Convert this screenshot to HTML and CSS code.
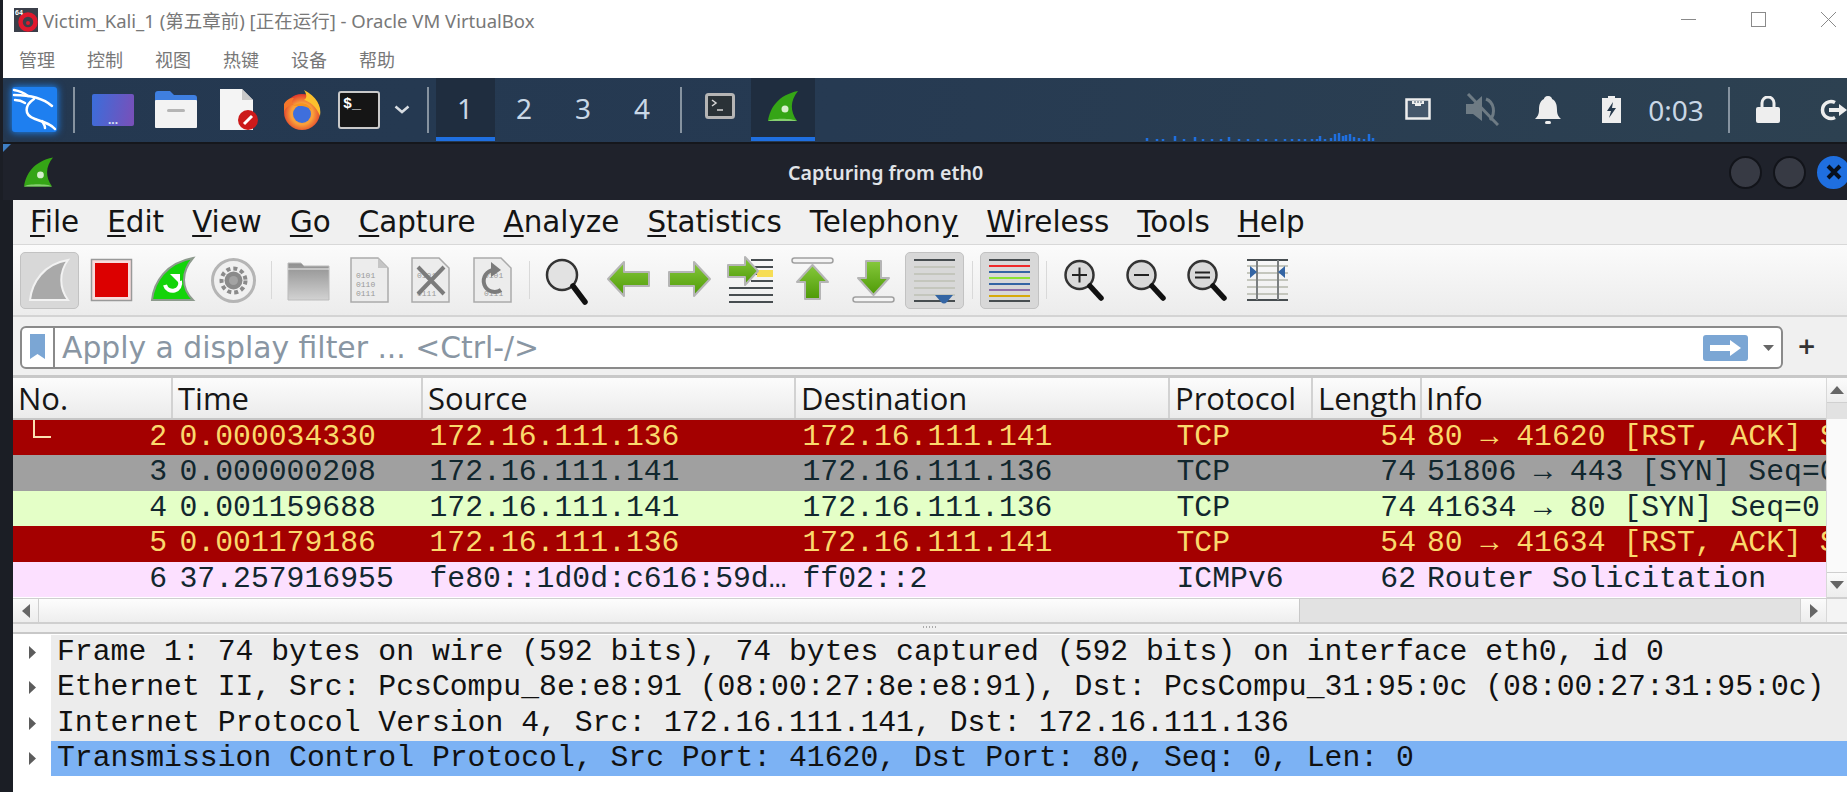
FILE: index.html
```html
<!DOCTYPE html>
<html lang="zh-CN">
  <head>
    <meta charset="UTF-8" />
    <title>Victim_Kali_1 - Oracle VM VirtualBox</title>
    <link rel="stylesheet" href="styles.css">
  </head>
  <body>
    <header class="vbox-title">
      <svg class="vbox-logo" width="24" height="24" viewBox="0 0 24 24">
        <rect width="24" height="24" fill="#3b3f4a"/>
        <circle cx="14" cy="14" r="7.5" fill="none" stroke="#e0182d" stroke-width="4.5"/>
        <circle cx="14" cy="15" r="2" fill="#e0182d"/>
        <text x="1" y="7" class="vbox-64">64</text>
      </svg>
      <span class="vbox-name">Victim_Kali_1 (第五章前) [正在运行] - Oracle VM VirtualBox</span>
      <div class="win-btns">
        <svg width="15" height="15" viewBox="0 0 15 15"><path d="M0 7.5H15" stroke="#8a8a8a"/></svg>
        <svg width="15" height="15" viewBox="0 0 15 15"><rect x=".5" y=".5" width="14" height="14" fill="none" stroke="#8a8a8a"/></svg>
        <svg width="15" height="15" viewBox="0 0 15 15"><path d="M0 0L15 15M15 0L0 15" stroke="#8a8a8a"/></svg>
      </div>
    </header>
    <nav class="vbox-menu">
      <span>管理</span><span>控制</span><span>视图</span><span>热键</span><span>设备</span><span>帮助</span>
    </nav>

    <div class="panel">
      <div class="kali-btn">
        <svg width="45" height="45" viewBox="0 0 45 45" fill="none" stroke="#fff" stroke-width="2.500" stroke-linecap="round">
          <path d="M2 8C16 8 30 10 40 19"/>
          <path d="M22 12C13 18 11 28 23 32C32 35 39 37 43 42"/>
          <path d="M2 3C8 4 12 6 16 9M3 13C7 13 10 14 13 16M30 34C32 37 33 39 33 41"/>
        </svg>
      </div>
      <i class="panel-sep sep-first"></i>
      <div class="launcher"><span class="desk-icon"><b>...</b></span></div>
      <div class="launcher">
        <svg width="42" height="37" viewBox="0 0 42 37">
          <path d="M0 3a3 3 0 013-3h12l4 4h20a3 3 0 013 3v5H0z" fill="#3f7fe0"/>
          <rect y="9" width="42" height="28" rx="1" fill="#f3f3f3"/>
          <rect x="12" y="18" width="18" height="3" rx="1.5" fill="#b5b5b5"/>
        </svg>
      </div>
      <div class="launcher">
        <svg width="38" height="41" viewBox="0 0 38 41">
          <path d="M0 0H22L33 11V41H0z" fill="#f4f4f4"/>
          <path d="M22 0L33 11H22z" fill="#c9c9c9"/>
          <circle cx="28" cy="31" r="10" fill="#cc1a1a"/>
          <path d="M24 35L32 27" stroke="#fff" stroke-width="3"/>
        </svg>
      </div>
      <div class="launcher">
        <svg width="40" height="40" viewBox="0 0 40 40">
          <defs>
            <radialGradient id="fox" cx=".5" cy=".55" r=".55">
              <stop offset=".55" stop-color="#f9a03a"/>
              <stop offset="1" stop-color="#e0352b"/>
            </radialGradient>
          </defs>
          <circle cx="20" cy="22" r="18" fill="url(#fox)"/>
          <path d="M22 0C34 6 40 16 38 26C34 16 28 12 22 10C26 8 24 3 22 0z" fill="#fbc02d"/>
          <path d="M2 14C5 9 8 8 12 8C9 12 10 14 12 15C7 15 4 17 2 22z" fill="#f4762b"/>
          <circle cx="20" cy="24" r="9" fill="#3f6fdc"/>
          <path d="M11 16C16 12 26 12 30 20C24 15 17 16 11 16z" fill="#f7941e"/>
        </svg>
      </div>
      <div class="launcher launcher-term">
        <svg width="42" height="38" viewBox="0 0 42 38">
          <rect x="1" y="1" width="40" height="36" rx="2" fill="#151515" stroke="#c9c9c9" stroke-width="2"/>
          <text x="5" y="17" class="term-prompt">$_</text>
        </svg>
      </div>
      <div class="launcher-more">
        <svg width="16" height="9" viewBox="0 0 16 9"><path d="M1.500 1.500L8 7L14.500 1.500" fill="none" stroke="#d8dde2" stroke-width="2.500"/></svg>
      </div>
      <i class="panel-sep sep-ws"></i>
      <div class="ws ws-on">1</div>
      <div class="ws">2</div>
      <div class="ws">3</div>
      <div class="ws">4</div>
      <i class="panel-sep sep-tasks"></i>
      <div class="task">
        <svg width="30" height="26" viewBox="0 0 30 26">
          <rect x="1.500" y="1.500" width="27" height="23" rx="2" fill="#2a3237" stroke="#b5b5b5" stroke-width="3"/>
          <path d="M7 7L11 10L7 13M12 17H18" fill="none" stroke="#d5d5d5" stroke-width="1.500"/>
        </svg>
      </div>
      <div class="task task-on">
        <svg width="30" height="30" viewBox="0 0 30 30">
          <path d="M0 30C2 17 10 4 30 0C22 10 22 20 29 30z" fill="#35a516"/>
          <path d="M0 30C4 27 24 27 29 30z" fill="#86cf70"/>
          <circle cx="17" cy="18" r="3.500" fill="#d7efcd"/>
        </svg>
      </div>
      <div class="spectrum">
        <svg width="230" height="9" viewBox="0 0 230 9">
          <path d="M2 9V6M12 9V7M18 9V7M30 9V4M39 9V7M50 9V5M58 9V7M67 9V7M76 9V7M84 9V5M94 9V7M103 9V7M113 9V7M121 9V7M131 9V7M140 9V7M147 9V7M154 9V7M160 9V7M167 9V7M172 9V7M175 9V4M180 9V7M186 9V6M190 9V2M194 9V1M198 9V4M201 9V3M205 9V2M209 9V5M214 9V6M219 9V7M224 9V2M228 9V6" stroke="#1f6fe0" stroke-width="2.500"/>
        </svg>
      </div>
      <div class="tray">
        <div class="tray-slot">
          <svg width="26" height="24" viewBox="0 0 26 24">
            <path d="M1.500 1.500H24.500V20.500H1.500z" fill="#44566a" stroke="#eee" stroke-width="2.500"/>
            <path d="M7 3H19V6H16V8H10V6H7z" fill="#eee"/>
            <path d="M10 3V5M13 3V5M16 3V5" stroke="#44566a"/>
          </svg>
        </div>
        <div class="tray-slot">
          <svg width="33" height="33" viewBox="0 0 33 33">
            <path d="M0 11H7L16 3V28L7 21H0z" fill="#6e7b84"/>
            <path d="M20 6C28 9 30 20 24 27" fill="none" stroke="#6e7b84" stroke-width="3"/>
            <path d="M2 1L32 32" stroke="#6e7b84" stroke-width="3"/>
          </svg>
        </div>
        <div class="tray-slot">
          <svg width="26" height="28" viewBox="0 0 26 28">
            <path d="M13 0C16 0 17 2 17 3C21 5 22 9 22 14C22 19 24 21 26 23H0C2 21 4 19 4 14C4 9 5 5 9 3C9 2 10 0 13 0z" fill="#eee"/>
            <rect x="10" y="25" width="6" height="3" rx="1.500" fill="#eee"/>
          </svg>
        </div>
        <div class="tray-slot tray-battery">
          <svg width="19" height="27" viewBox="0 0 19 27">
            <path d="M6 0H13V2H19V27H0V2H6z" fill="#eee"/>
            <path d="M11 6L5 15H9L7 22L14 12H10z" fill="#26394c"/>
          </svg>
        </div>
        <div class="clock">0:03</div>
        <i class="panel-sep sep-tray"></i>
        <div class="tray-slot">
          <svg width="24" height="27" viewBox="0 0 24 27">
            <path d="M6 12V7a6 6 0 0112 0V12" fill="none" stroke="#eee" stroke-width="3"/>
            <rect y="11" width="24" height="16" rx="2" fill="#eee"/>
          </svg>
        </div>
        <div class="tray-slot tray-logout">
          <svg width="27" height="22" viewBox="0 0 27 22">
            <path d="M15 3.500A8.500 8.500 0 1015 18.500" fill="none" stroke="#eee" stroke-width="3.500"/>
            <path d="M9 9H19V5L27 11L19 17V13H9z" fill="#eee"/>
          </svg>
        </div>
      </div>
    </div>

    <div class="ws-title">
      <svg class="tri-mark" width="8" height="8" viewBox="0 0 8 8"><path d="M0 0H8L0 8z" fill="#3f7fc4"/></svg>
      <svg class="ws-logo" width="29" height="30" viewBox="0 0 30 30">
        <path d="M0 30C2 17 10 4 30 0C22 10 22 20 29 30z" fill="#35a516"/>
        <path d="M0 30C4 27 24 27 29 30z" fill="#86cf70"/>
        <circle cx="17" cy="18" r="3.500" fill="#d7efcd"/>
      </svg>
      <span class="ws-caption">Capturing from eth0</span>
      <div class="ws-btns">
        <i class="round"></i>
        <i class="round"></i>
        <i class="round round-x">
          <svg width="16" height="16" viewBox="0 0 16 16"><path d="M2 2L14 14M14 2L2 14" stroke="#07101f" stroke-width="4"/></svg>
        </i>
      </div>
    </div>

    <main class="wireshark">
      <nav class="menubar">
        <span><u>F</u>ile</span>
        <span><u>E</u>dit</span>
        <span><u>V</u>iew</span>
        <span><u>G</u>o</span>
        <span><u>C</u>apture</span>
        <span><u>A</u>nalyze</span>
        <span><u>S</u>tatistics</span>
        <span>Telephon<u>y</u></span>
        <span><u>W</u>ireless</span>
        <span><u>T</u>ools</span>
        <span><u>H</u>elp</span>
      </nav>

      <div class="toolbar">
        <div class="tool tool-on">
          <svg viewBox="0 0 59 57"><path d="M10 48C12 30 24 12 48 8C39 20 39 36 48 48z" fill="#a9a9a9" stroke="#f2f2f2" stroke-width="2"/></svg>
        </div>
        <div class="tool">
          <svg viewBox="0 0 59 57"><rect x="9.500" y="7.500" width="40" height="41" fill="#f8dcdc" stroke="#999" stroke-width="1.500"/><rect x="13" y="11" width="33" height="34" fill="#dc0000"/></svg>
        </div>
        <div class="tool">
          <svg viewBox="0 0 59 57">
            <path d="M9 48C11 30 23 11 50 6C38 20 38 36 50 48z" fill="#13d40a" stroke="#8d9a8d" stroke-width="2"/>
            <path d="M37 29A7.500 7.500 0 1122 33" fill="none" stroke="#fff" stroke-width="4"/>
            <path d="M27 22H37V32z" fill="#fff"/>
          </svg>
        </div>
        <div class="tool">
          <svg viewBox="0 0 59 57">
            <circle cx="29.500" cy="28.500" r="21" fill="#f0f0f0" stroke="#b5b5b5" stroke-width="3"/>
            <circle cx="29.500" cy="28.500" r="12" fill="none" stroke="#8a8a8a" stroke-width="4" stroke-dasharray="4 3"/>
            <circle cx="29.500" cy="28.500" r="9" fill="#8a8a8a"/>
            <circle cx="29.500" cy="28.500" r="4.500" fill="#a3a3a3"/>
          </svg>
        </div>
        <i class="tool-sep"></i>
        <div class="tool">
          <svg viewBox="0 0 59 57">
            <defs>
              <linearGradient id="fold" x1="0" y1="0" x2="0" y2="1">
                <stop offset="0" stop-color="#8f8f8f"/>
                <stop offset="1" stop-color="#d2d2d2"/>
              </linearGradient>
            </defs>
            <path d="M9 11H22L25 14H50V48H9z" fill="url(#fold)" stroke="#bbb"/>
            <path d="M9 17H50" stroke="#eee"/>
          </svg>
        </div>
        <div class="tool">
          <svg viewBox="0 0 59 57">
            <path d="M11 6H38L48 16V50H11z" fill="#ececec" stroke="#aaa" stroke-width="1.500"/>
            <path d="M38 6V16H48z" fill="#c5c5c5"/>
            <text x="16" y="26" class="bits">0101</text><text x="16" y="35" class="bits">0110</text><text x="16" y="44" class="bits">0111</text>
          </svg>
        </div>
        <div class="tool">
          <svg viewBox="0 0 59 57">
            <path d="M11 6H38L48 16V50H11z" fill="#ececec" stroke="#aaa" stroke-width="1.500"/>
            <text x="16" y="26" class="bits">0101</text><text x="16" y="44" class="bits">0111</text>
            <path d="M17 15L43 42M43 15L17 42" stroke="#7b7b7b" stroke-width="4"/>
          </svg>
        </div>
        <div class="tool">
          <svg viewBox="0 0 59 57">
            <path d="M11 6H38L48 16V50H11z" fill="#ececec" stroke="#aaa" stroke-width="1.500"/>
            <text x="21" y="26" class="bits">0101</text><text x="21" y="44" class="bits">0111</text>
            <path d="M38 38A11 11 0 1131 18" fill="none" stroke="#7b7b7b" stroke-width="4"/>
            <path d="M28 10V25L38 18z" fill="#7b7b7b"/>
          </svg>
        </div>
        <i class="tool-sep"></i>
        <div class="tool">
          <svg viewBox="0 0 59 57">
            <circle cx="25" cy="23" r="15" fill="#e2e2e2" stroke="#333" stroke-width="2.500"/>
            <path d="M36 34L48 50" stroke="#111" stroke-width="5.500" stroke-linecap="round"/>
          </svg>
        </div>
        <div class="tool">
          <svg viewBox="0 0 59 57">
            <defs>
              <linearGradient id="leaf" x1="0" y1="0" x2="0" y2="1">
                <stop offset="0" stop-color="#86c83c"/>
                <stop offset="1" stop-color="#4e9a06"/>
              </linearGradient>
            </defs>
            <path d="M9 27L25 10V20H50V34H25V44z" fill="url(#leaf)" stroke="#b5b5b5" stroke-width="2" stroke-linejoin="round"/>
          </svg>
        </div>
        <div class="tool">
          <svg viewBox="0 0 59 57"><path d="M50 27L34 10V20H9V34H34V44z" fill="url(#leaf)" stroke="#b5b5b5" stroke-width="2" stroke-linejoin="round"/></svg>
        </div>
        <div class="tool">
          <svg viewBox="0 0 59 57">
            <path d="M30 8H52M30 15H52M30 22H52M30 29H52M8 36H52M8 43H52M8 50H52" stroke="#474d50" stroke-width="2"/>
            <rect x="36" y="18" width="16" height="7" fill="#f6dd55"/>
            <path d="M7 13H24V5L37 19L24 33V25H7z" fill="url(#leaf)" stroke="#b5b5b5" stroke-width="2" stroke-linejoin="round"/>
          </svg>
        </div>
        <div class="tool">
          <svg viewBox="0 0 59 57">
            <rect x="9" y="6" width="41" height="5" rx="2.500" fill="#f4f4f4" stroke="#a0a0a0" stroke-width="1.500"/>
            <path d="M29.500 13L45 30H37V47H22V30H14z" fill="url(#leaf)" stroke="#b5b5b5" stroke-width="2" stroke-linejoin="round"/>
          </svg>
        </div>
        <div class="tool">
          <svg viewBox="0 0 59 57">
            <path d="M29.500 43L45 26H37V9H22V26H14z" fill="url(#leaf)" stroke="#b5b5b5" stroke-width="2" stroke-linejoin="round"/>
            <rect x="9" y="45" width="41" height="5" rx="2.500" fill="#f4f4f4" stroke="#a0a0a0" stroke-width="1.500"/>
          </svg>
        </div>
        <div class="tool tool-on">
          <svg viewBox="0 0 59 57">
            <path d="M9 8H50" stroke="#474d50" stroke-width="2"/>
            <path d="M9 15H50M9 22H50M9 29H50M9 36H50M9 43H50" stroke="#c4c6bd" stroke-width="2"/>
            <path d="M9 49H50" stroke="#474d50" stroke-width="2"/>
            <path d="M30 43H48L42 50Q39 53 36 50z" fill="#3465a4"/>
          </svg>
        </div>
        <i class="tool-sep"></i>
        <div class="tool tool-on">
          <svg viewBox="0 0 59 57">
            <path d="M9 8H50" stroke="#474d50" stroke-width="2"/>
            <path d="M9 14H50" stroke="#ef2929" stroke-width="2"/>
            <path d="M9 20H50" stroke="#3465a4" stroke-width="2"/>
            <path d="M9 26H50" stroke="#8ae234" stroke-width="2"/>
            <path d="M9 32H50" stroke="#3465a4" stroke-width="2"/>
            <path d="M9 38H50" stroke="#8f6fa8" stroke-width="2"/>
            <path d="M9 44H50" stroke="#d7a90c" stroke-width="2"/>
            <path d="M9 49H50" stroke="#474d50" stroke-width="2"/>
          </svg>
        </div>
        <i class="tool-sep"></i>
        <div class="tool">
          <svg viewBox="0 0 59 57">
            <circle cx="25.500" cy="23" r="14" fill="#d9d9d9" stroke="#333" stroke-width="2.500"/>
            <path d="M18 23H33M25.500 15.500V30.500" stroke="#222" stroke-width="2"/>
            <path d="M36 34L47 46" stroke="#111" stroke-width="5.500" stroke-linecap="round"/>
          </svg>
        </div>
        <div class="tool">
          <svg viewBox="0 0 59 57">
            <circle cx="25.500" cy="23" r="14" fill="#d9d9d9" stroke="#333" stroke-width="2.500"/>
            <path d="M18 23H33" stroke="#222" stroke-width="2"/>
            <path d="M36 34L47 46" stroke="#111" stroke-width="5.500" stroke-linecap="round"/>
          </svg>
        </div>
        <div class="tool">
          <svg viewBox="0 0 59 57">
            <circle cx="25.500" cy="23" r="14" fill="#d9d9d9" stroke="#333" stroke-width="2.500"/>
            <path d="M18 20.500H33M18 25.500H33" stroke="#222" stroke-width="2"/>
            <path d="M36 34L47 46" stroke="#111" stroke-width="5.500" stroke-linecap="round"/>
          </svg>
        </div>
        <div class="tool">
          <svg viewBox="0 0 59 57">
            <path d="M9 8H50M9 48H50" stroke="#474d50" stroke-width="2"/>
            <path d="M9 14H50M9 21H50M9 28H50M9 35H50M9 42H50" stroke="#c4c6bd" stroke-width="2"/>
            <path d="M19 8V48M40 8V48" stroke="#7b7f80" stroke-width="2"/>
            <path d="M12 14V26L19 20zM47 14V26L40 20z" fill="#3465a4"/>
          </svg>
        </div>
      </div>

      <div class="filterbar">
        <div class="filter">
          <span class="filter-mark">
            <svg width="15" height="25" viewBox="0 0 15 25"><path d="M0 0H15V25L7.500 20L0 25z" fill="#7ba6d4"/></svg>
          </span>
          <span class="filter-hint">Apply a display filter ... &lt;Ctrl-/&gt;</span>
          <span class="filter-apply">
            <svg width="31" height="16" viewBox="0 0 31 16"><path d="M0 5H20V0L31 8L20 16V11H0z" fill="#fff"/></svg>
          </span>
          <svg class="filter-drop" width="11" height="6" viewBox="0 0 11 6"><path d="M0 0H11L5.500 6z" fill="#666"/></svg>
        </div>
        <span class="filter-plus">+</span>
      </div>

      <section class="packets">
        <div class="packet-table">
          <div class="cols head">
            <span>No.</span><span>Time</span><span>Source</span><span>Destination</span><span>Protocol</span><span>Length</span><span>Info</span>
          </div>
          <div class="cols row row-red">
            <span class="num"><i class="tree-end"></i>2</span><span>0.000034330</span><span>172.16.111.136</span><span>172.16.111.141</span><span>TCP</span><span class="len">54</span><span>80 → 41620 [RST, ACK] Seq=1 Ack=1 Win=0 Len=0</span>
          </div>
          <div class="cols row row-gray">
            <span class="num">3</span><span>0.000000208</span><span>172.16.111.141</span><span>172.16.111.136</span><span>TCP</span><span class="len">74</span><span>51806 → 443 [SYN] Seq=0 Win=64240 Len=0</span>
          </div>
          <div class="cols row row-green">
            <span class="num">4</span><span>0.001159688</span><span>172.16.111.141</span><span>172.16.111.136</span><span>TCP</span><span class="len">74</span><span>41634 → 80 [SYN] Seq=0 Win=64240 Len=0</span>
          </div>
          <div class="cols row row-red">
            <span class="num">5</span><span>0.001179186</span><span>172.16.111.136</span><span>172.16.111.141</span><span>TCP</span><span class="len">54</span><span>80 → 41634 [RST, ACK] Seq=1 Ack=1 Win=0 Len=0</span>
          </div>
          <div class="cols row row-pink">
            <span class="num">6</span><span>37.257916955</span><span>fe80::1d0d:c616:59d…</span><span>ff02::2</span><span>ICMPv6</span><span class="len">62</span><span>Router Solicitation</span>
          </div>
        </div>
        <div class="vscroll">
          <span class="vs-btn"><svg width="14" height="8" viewBox="0 0 14 8"><path d="M0 8L7 0L14 8z" fill="#666"/></svg></span>
          <span class="vs-trough"></span>
          <span class="vs-thumb"></span>
          <span class="vs-btn"><svg width="14" height="8" viewBox="0 0 14 8"><path d="M0 0L7 8L14 0z" fill="#666"/></svg></span>
        </div>
      </section>

      <div class="hscroll">
        <span class="hs-btn"><svg width="8" height="14" viewBox="0 0 8 14"><path d="M8 0L0 7L8 14z" fill="#666"/></svg></span>
        <span class="hs-thumb"></span>
        <span class="hs-trough"></span>
        <span class="hs-btn"><svg width="8" height="14" viewBox="0 0 8 14"><path d="M0 0L8 7L0 14z" fill="#666"/></svg></span>
        <span class="hs-corner"></span>
      </div>

      <div class="splitter"><i></i></div>

      <section class="details">
        <div class="detail"><svg class="caret" width="7" height="13" viewBox="0 0 7 13"><path d="M0 0L7 6.500L0 13z"/></svg><span>Frame 1: 74 bytes on wire (592 bits), 74 bytes captured (592 bits) on interface eth0, id 0</span></div>
        <div class="detail"><svg class="caret" width="7" height="13" viewBox="0 0 7 13"><path d="M0 0L7 6.500L0 13z"/></svg><span>Ethernet II, Src: PcsCompu_8e:e8:91 (08:00:27:8e:e8:91), Dst: PcsCompu_31:95:0c (08:00:27:31:95:0c)</span></div>
        <div class="detail"><svg class="caret" width="7" height="13" viewBox="0 0 7 13"><path d="M0 0L7 6.500L0 13z"/></svg><span>Internet Protocol Version 4, Src: 172.16.111.141, Dst: 172.16.111.136</span></div>
        <div class="detail detail-on"><svg class="caret" width="7" height="13" viewBox="0 0 7 13"><path d="M0 0L7 6.500L0 13z"/></svg><span>Transmission Control Protocol, Src Port: 41620, Dst Port: 80, Seq: 0, Len: 0</span></div>
      </section>
    </main>
  </body>
</html>
```

FILE: styles.css
```css
* {
  box-sizing: border-box;
}

body {
  margin: 0;
  width: 1847px;
  height: 792px;
  overflow: hidden;
  background-color: #1b1e25;
  font-family: "Noto Sans", "Noto Sans CJK SC", sans-serif;
}

/* virtualbox window chrome */
.vbox-title {
  height: 39px;
  margin-left: 3px;
  padding-left: 11px;
  display: flex;
  align-items: center;
  background-color: #fff;
}

.vbox-logo {
  flex: none;
}

.vbox-64 {
  font-family: "Liberation Sans", sans-serif;
  font-size: 7px;
  font-weight: bold;
  fill: #fff;
}

.vbox-name {
  margin-left: 5px;
  font-size: 18.5px;
  color: #787878;
  white-space: nowrap;
}

.win-btns {
  margin-left: auto;
  padding-right: 11px;
  display: flex;
  gap: 55px;
}

.win-btns svg {
  display: block;
}

.vbox-menu {
  height: 39px;
  margin-left: 3px;
  padding-left: 16px;
  display: flex;
  align-items: center;
  gap: 32px;
  background-color: #fff;
  font-size: 18px;
  color: #777;
}

/* kali panel */
.panel {
  height: 64px;
  margin-left: 3px;
  display: flex;
  background: linear-gradient(100deg, #243850, #263a52 45%, #2d4151);
  overflow: hidden;
}

.panel svg {
  display: block;
}

.kali-btn {
  width: 45px;
  height: 45px;
  margin: 9px 0 0 9px;
  background-color: #1e7ff0;
  border-radius: 3px;
  box-shadow: 0 0 7px 1px #1c7de8;
}

.panel-sep {
  flex: none;
  width: 2px;
  height: 46px;
  margin-top: 9px;
  background-color: #8693a0;
}

.sep-first {
  margin-left: 16px;
  margin-right: 6.5px;
}

.sep-ws {
  margin-left: 7px;
  margin-right: 7px;
}

.sep-tasks {
  margin-left: 8px;
  margin-right: 7px;
}

.sep-tray {
  margin-left: 18px;
  margin-right: 5px;
}

.launcher {
  width: 63px;
  height: 63px;
  display: flex;
  align-items: center;
  justify-content: center;
}

.launcher-term {
  width: 50px;
}

.launcher-more {
  width: 36px;
  height: 63px;
  display: flex;
  align-items: center;
  justify-content: center;
}

.desk-icon {
  width: 42px;
  height: 32px;
  display: flex;
  align-items: flex-end;
  justify-content: center;
  background: linear-gradient(100deg, #3a6edb, #7a4fb8);
  border-radius: 2px;
}

.desk-icon b {
  font-size: 12px;
  line-height: 12px;
  color: #d7e2f5;
}

.term-prompt {
  font-family: "Liberation Mono", monospace;
  font-size: 15px;
  font-weight: bold;
  fill: #fff;
}

.ws {
  width: 59px;
  height: 63px;
  display: flex;
  align-items: center;
  justify-content: center;
  border-bottom: 4px solid transparent;
  font-size: 28px;
  color: #c9d7e6;
}

.ws-on {
  background-color: #1f2d3f;
  border-bottom-color: #1f6fe0;
}

.task {
  width: 62px;
  height: 63px;
  display: flex;
  align-items: center;
  justify-content: center;
  padding-bottom: 3px;
  border-bottom: 4px solid transparent;
}

.task-on {
  width: 64px;
  background-color: #1f2d3f;
  border-bottom-color: #1f6fe0;
}

.spectrum {
  width: 330px;
  flex: none;
  align-self: flex-end;
  margin-bottom: 1px;
  padding-left: 330px;
  overflow: visible;
}

.tray {
  margin-left: auto;
  display: flex;
}

.tray-slot {
  width: 65px;
  height: 63px;
  display: flex;
  align-items: center;
  justify-content: center;
}

.tray-battery {
  width: 62px;
}

.tray-logout {
  width: 47px;
  padding-left: 20px;
  justify-content: flex-start;
}

.clock {
  width: 68px;
  height: 63px;
  display: flex;
  align-items: center;
  justify-content: center;
  font-size: 28px;
  color: #c9d7e6;
}

/* wireshark title bar */
.ws-title {
  position: relative;
  height: 58px;
  margin-left: 3px;
  display: flex;
  align-items: center;
  background-color: #1f222b;
  border-top: 2px solid #15171c;
}

.tri-mark {
  position: absolute;
  left: 0;
  top: 0;
}

.ws-logo {
  margin-left: 21px;
  flex: none;
}

.ws-caption {
  margin-left: 735px;
  font-size: 19.6px;
  font-weight: 600;
  color: #e1e4e8;
}

.ws-btns {
  margin-left: auto;
  display: flex;
  gap: 11px;
  margin-right: -3px;
}

.round {
  width: 33px;
  height: 33px;
  border-radius: 50%;
  background-color: #373a44;
  border: 2px solid #12141a;
}

.round-x {
  display: flex;
  align-items: center;
  justify-content: center;
  background-color: #1f6fe0;
  border-color: #1f6fe0;
}

/* wireshark main window */
.wireshark {
  margin-left: 13px;
  height: 592px;
  background-color: #fff;
  overflow: hidden;
}

.menubar {
  height: 45px;
  padding-left: 3px;
  display: flex;
  align-items: center;
  background-color: #f0f0f0;
  border-bottom: 1px solid #d8d8d8;
  font-family: "DejaVu Sans", sans-serif;
  font-size: 29.4px;
  color: #141414;
}

.menubar span {
  padding: 0 14px;
}

.menubar u {
  text-underline-offset: 3px;
}

.toolbar {
  height: 72px;
  padding-left: 6px;
  display: flex;
  align-items: center;
  background: linear-gradient(#fbfbfb, #ececec);
  border-bottom: 2px solid #d4d4d4;
}

.tool {
  flex: none;
  width: 59px;
  height: 57px;
  margin: 0 1.2px;
  border: 1px solid transparent;
  border-radius: 5px;
}

.tool svg {
  display: block;
  width: 59px;
  height: 57px;
  margin: -1px;
}

.tool-on {
  background-color: #d8d8d8;
  border-color: #c2c2c2;
}

.tool-sep {
  flex: none;
  width: 1px;
  height: 38px;
  margin: 0 6px;
  background-color: #d9d9d9;
}

.bits {
  font-family: "Liberation Mono", monospace;
  font-size: 8px;
  fill: #999;
}

.filterbar {
  height: 61px;
  padding: 9px 0 0 7px;
  display: flex;
  background-color: #f0f0f0;
  border-bottom: 3px solid #c8c8c8;
}

.filter {
  width: 1763px;
  height: 43px;
  display: flex;
  align-items: center;
  background-color: #fff;
  border: 2px solid #8a8a8a;
  border-radius: 6px;
}

.filter-mark {
  width: 33px;
  height: 100%;
  padding: 6px 0 0 8px;
  border-right: 2px solid #8a8a8a;
}

.filter-mark svg {
  display: block;
}

.filter-hint {
  margin-left: 7px;
  font-family: "DejaVu Sans", sans-serif;
  font-size: 29.8px;
  color: #8996a3;
  white-space: nowrap;
}

.filter-apply {
  margin-left: auto;
  width: 45px;
  height: 26px;
  display: flex;
  align-items: center;
  justify-content: center;
  background-color: #7ba6d4;
  border-radius: 3px;
}

.filter-drop {
  margin: 0 7px 0 15px;
}

.filter-plus {
  margin-left: 14px;
  font-family: "DejaVu Sans", sans-serif;
  font-size: 23px;
  line-height: 40px;
  font-weight: bold;
  color: #333;
}

/* packet list */
.packets {
  display: flex;
  height: 220px;
}

.packet-table {
  width: 1813px;
}

.cols {
  display: grid;
  grid-template-columns: 160px 250px 373px 374px 143px 109px 404px;
}

.cols span {
  white-space: nowrap;
  overflow: hidden;
  padding-left: 6.5px;
}

.head {
  height: 42px;
  background: linear-gradient(#fcfcfc, #ebebeb);
  border-bottom: 2px solid #c6c6c6;
  font-family: "Open Sans", sans-serif;
  font-size: 31px;
  line-height: 40px;
  color: #161616;
}

.head span {
  padding-left: 5px;
  border-right: 2px solid #d2d2d2;
}

.head span:last-child {
  padding-left: 4px;
  border-right: 0;
}

.row {
  position: relative;
  height: 35.4px;
  font-family: "Liberation Mono", monospace;
  font-size: 29.75px;
  line-height: 34px;
}

.row span:last-child {
  padding-left: 5px;
}

.row .num,
.row .len {
  padding: 0 6px 0 0;
  text-align: right;
}

.row-red {
  background-color: #a40000;
  color: #fad96c;
}

.row-gray {
  background-color: #a0a0a0;
  color: #12272e;
}

.row-green {
  background-color: #e4ffc7;
  color: #12272e;
}

.row-pink {
  background-color: #fce0ff;
  color: #12272e;
}

.tree-end {
  position: absolute;
  left: 20px;
  top: 0;
  width: 18px;
  height: 18px;
  border-left: 2px solid #fce0b0;
  border-bottom: 2px solid #fce0b0;
}

.vscroll {
  width: 21px;
  display: flex;
  flex-direction: column;
  border-left: 1px solid #d8d8d8;
}

.vs-btn {
  height: 25px;
  display: flex;
  align-items: center;
  justify-content: center;
  background: linear-gradient(#fbfbfb, #ededed);
  border-bottom: 1px solid #d0d0d0;
}

.vs-trough {
  height: 16px;
  background-color: #e2e2e2;
}

.vs-thumb {
  height: 154px;
  background-color: #fafafa;
  border-bottom: 1px solid #cfcfcf;
}

.hscroll {
  height: 26px;
  display: flex;
  border-top: 1px solid #cfcfcf;
  border-bottom: 2px solid #cfcfcf;
}

.hs-btn {
  width: 26px;
  flex: none;
  display: flex;
  align-items: center;
  justify-content: center;
  background: linear-gradient(#fbfbfb, #ededed);
  border-right: 1px solid #cfcfcf;
}

.hs-btn:nth-child(4) {
  border-left: 1px solid #cfcfcf;
  border-right: 0;
}

.hs-thumb {
  width: 1261px;
  flex: none;
  background: linear-gradient(#fdfdfd, #eeeeee);
  border-right: 1px solid #c8c8c8;
}

.hs-trough {
  width: 500px;
  flex: none;
  background-color: #e2e2e2;
}

.hs-corner {
  flex: 1;
  background-color: #f4f4f4;
  border-left: 1px solid #d8d8d8;
}

.splitter {
  height: 10px;
  display: flex;
  justify-content: center;
  padding-top: 2px;
  background-color: #f0f0f0;
  border-bottom: 2px solid #c8c8c8;
}

.splitter i {
  width: 16px;
  height: 2px;
  background-image: radial-gradient(#aaa 45%, transparent 50%);
  background-size: 3px 2px;
}

/* packet details */
.details {
  padding-top: 1px;
}

.detail {
  height: 35.3px;
  display: flex;
  align-items: center;
  font-family: "Liberation Mono", monospace;
  font-size: 29.75px;
  color: #111;
  white-space: nowrap;
}

.caret {
  flex: none;
  margin: 0 15px 0 16px;
  fill: #5c5c5c;
}

.detail span {
  flex: 1;
  height: 100%;
  padding-left: 6px;
  line-height: 34px;
  background-color: #ececec;
}

.detail-on span {
  background-color: #7cb2f4;
}
```
